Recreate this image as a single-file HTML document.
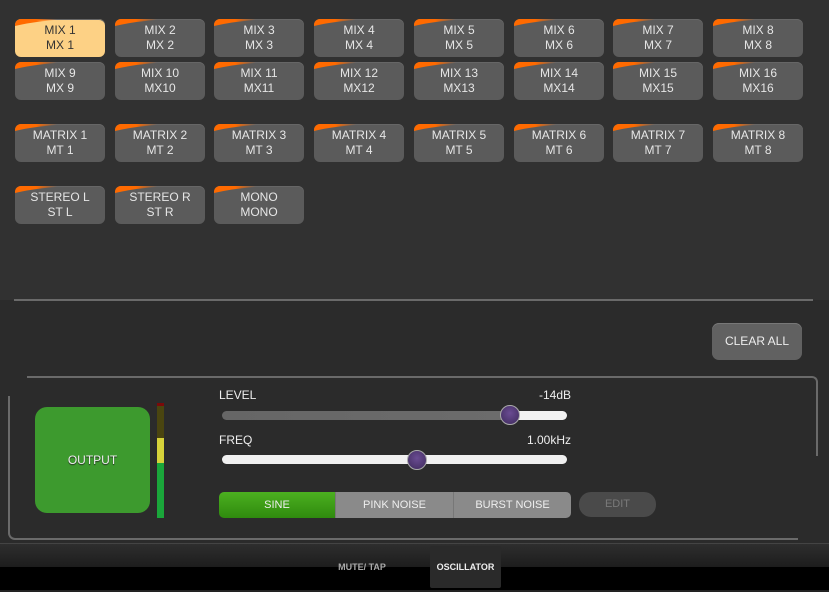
<!DOCTYPE html>
<html><head><style>
*{margin:0;padding:0;box-sizing:border-box}
body{width:829px;height:592px;background:#2b2b2b;position:relative;overflow:hidden;font-family:"Liberation Sans",sans-serif}
.top{position:absolute;left:0;top:0;width:829px;height:300px;background:#313131}
.b{position:absolute;width:90px;height:38px;border-radius:6px;background:#5b5b5b;color:#e6e6e6;font-size:12px;line-height:15px;text-align:center;padding-top:4px;overflow:hidden;box-shadow:inset 0 1px 0 #666}
.b svg{position:absolute;left:0;top:0}
.b span{position:relative;z-index:1}
.b.sel{background:#fdd185;color:#333}
.line{position:absolute;background:#6a6a6a;height:2px}
</style></head><body>
<div class="top"></div>
<div id="g"></div>
<script>
var rows=[[19,["MIX 1|MX 1","MIX 2|MX 2","MIX 3|MX 3","MIX 4|MX 4","MIX 5|MX 5","MIX 6|MX 6","MIX 7|MX 7","MIX 8|MX 8"]],
[62,["MIX 9|MX 9","MIX 10|MX10","MIX 11|MX11","MIX 12|MX12","MIX 13|MX13","MIX 14|MX14","MIX 15|MX15","MIX 16|MX16"]],
[124,["MATRIX 1|MT 1","MATRIX 2|MT 2","MATRIX 3|MT 3","MATRIX 4|MT 4","MATRIX 5|MT 5","MATRIX 6|MT 6","MATRIX 7|MT 7","MATRIX 8|MT 8"]],
[186,["STEREO L|ST L","STEREO R|ST R","MONO|MONO"]]];
var acc='<svg width="90" height="12"><defs><linearGradient id="o" x1="0" x2="1"><stop offset="0" stop-color="#ff6a00"/><stop offset="0.35" stop-color="#ff6a00"/><stop offset="0.7" stop-color="#ff6a00" stop-opacity="0"/></linearGradient></defs><path d="M0,0 L60,0 Q25,1 0,7 Z" fill="url(#o)"/></svg>';
var h="";rows.forEach(function(r){r[1].forEach(function(t,i){var p=t.split("|");h+='<div class="b'+(r[0]==19&&i==0?' sel':'')+'" style="left:'+(15+i*99.7).toFixed(0)+'px;top:'+r[0]+'px">'+acc+'<span>'+p[0]+'<br>'+p[1]+'</span></div>';});});
document.getElementById("g").innerHTML=h;
</script>
<div class="line" style="left:14px;top:299px;width:799px"></div>
<div style="position:absolute;left:712px;top:323px;width:90px;height:37px;border-radius:7px;background:#616161;color:#eee;font-size:12px;line-height:37px;text-align:center;box-shadow:inset 0 1px 0 #777">CLEAR ALL</div>
<div style="position:absolute;left:27px;top:376px;width:791px;height:80px;border-top:2px solid #6a6a6a;border-right:2px solid #6a6a6a;border-top-right-radius:6px"></div>
<div style="position:absolute;left:8px;top:396px;width:790px;height:144px;border-left:2px solid #6a6a6a;border-bottom:2px solid #6a6a6a;border-bottom-left-radius:7px"></div>
<div style="position:absolute;left:35px;top:407px;width:115px;height:106px;border-radius:12px;background:#3d9a2e;color:#eee;font-size:12px;line-height:106px;text-align:center;text-shadow:0 1px 1px #222">OUTPUT</div>
<div style="position:absolute;left:157px;top:403px;width:7px;height:115px;background:linear-gradient(#7a0a0a 0,#7a0a0a 3px,#4a4510 3px,#4a4510 35px,#d6d23a 35px,#d6d23a 60px,#1aa63a 60px)"></div>
<div style="position:absolute;left:219px;top:388px;color:#eee;font-size:12px">LEVEL</div>
<div style="position:absolute;left:520px;top:388px;width:51px;text-align:right;color:#eee;font-size:12px">-14dB</div>
<div style="position:absolute;left:222px;top:411px;width:345px;height:9px;border-radius:5px;background:linear-gradient(90deg,#666 0,#6c6c6c 84%,#f2f2f2 84%)"></div>
<div style="position:absolute;left:500px;top:405px;width:20px;height:20px;border-radius:50%;background:radial-gradient(circle at 50% 40%,#6a4c92,#3e2a5c);border:1px solid #aaa"></div>
<div style="position:absolute;left:219px;top:433px;color:#eee;font-size:12px">FREQ</div>
<div style="position:absolute;left:500px;top:433px;width:71px;text-align:right;color:#eee;font-size:12px">1.00kHz</div>
<div style="position:absolute;left:222px;top:455px;width:345px;height:9px;border-radius:5px;background:#f0f0f0"></div>
<div style="position:absolute;left:407px;top:450px;width:20px;height:20px;border-radius:50%;background:radial-gradient(circle at 50% 40%,#6a4c92,#3e2a5c);border:1px solid #aaa"></div>
<div style="position:absolute;left:219px;top:492px;width:352px;height:26px;border-radius:5px;overflow:hidden;display:flex;font-size:11px;color:#eee;line-height:26px;text-align:center">
<div style="width:116px;background:linear-gradient(#4cb020,#2f8a0e)">SINE</div>
<div style="width:118px;background:#8a8a8a;border-left:1px solid #777">PINK NOISE</div>
<div style="width:118px;background:#8a8a8a;border-left:1px solid #777">BURST NOISE</div></div>
<div style="position:absolute;left:579px;top:492px;width:77px;height:25px;border-radius:12px;background:#4a4a4a;color:#7a7a7a;font-size:11px;line-height:25px;text-align:center">EDIT</div>
<div style="position:absolute;left:0;top:543px;width:829px;height:24px;background:linear-gradient(#2e2e2e,#1d1d1d);border-top:1px solid #444"></div>
<div style="position:absolute;left:0;top:567px;width:829px;height:23px;background:#000"></div>
<div style="position:absolute;left:0;top:590px;width:829px;height:2px;background:#222"></div>
<div style="position:absolute;left:430px;top:546px;width:71px;height:42px;background:#2a2a2a;border-radius:2px;color:#eee;font-size:9px;font-weight:bold;line-height:42px;text-align:center">OSCILLATOR</div>
<div style="position:absolute;left:330px;top:546px;width:64px;height:42px;color:#aaa;font-size:9px;font-weight:bold;line-height:42px;text-align:center">MUTE/ TAP</div>
</body></html>
